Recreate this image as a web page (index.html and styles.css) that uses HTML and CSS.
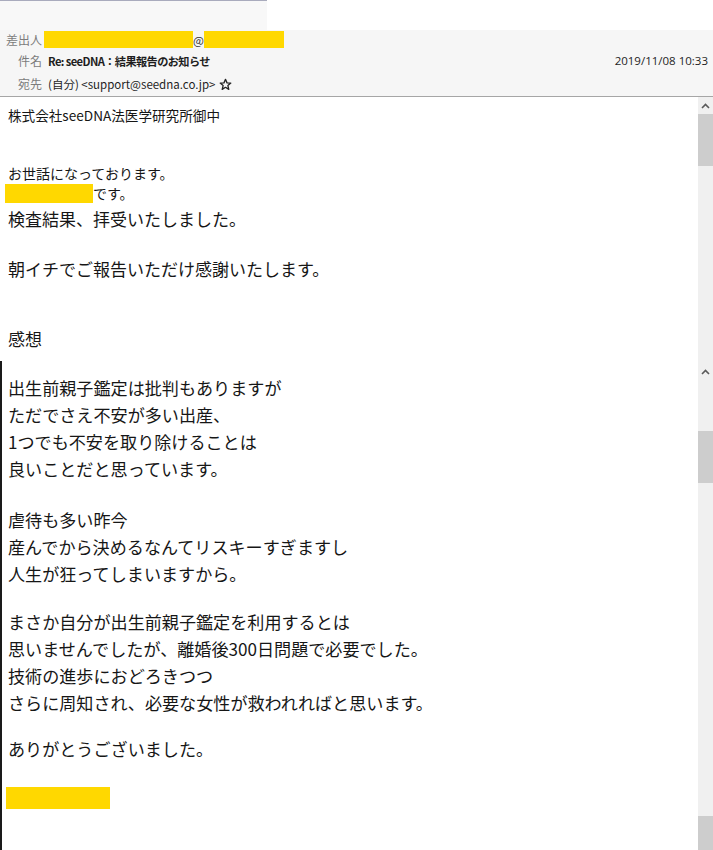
FILE: index.html
```html
<!DOCTYPE html>
<html lang="ja">
<head>
<meta charset="utf-8">
<title>Re: seeDNA：結果報告のお知らせ</title>
<link rel="stylesheet" href="styles.css">
</head>
<body>
<div class="topstrip"><div class="tab"></div></div>
<header class="hdr">
  <div class="row row-from">
    <span class="lbl">差出人</span>
    <span class="mask mask-name"></span><span class="at">@</span><span class="mask mask-domain"></span>
  </div>
  <div class="row row-subj">
    <span class="lbl">件名</span>
    <span class="subject">Re: seeDNA：結果報告のお知らせ</span>
    <span class="date">2019/11/08 10:33</span>
  </div>
  <div class="row row-to">
    <span class="lbl">宛先</span>
    <span class="val">(自分) &lt;support@seedna.co.jp&gt;</span>
    <svg class="star" width="13" height="13" viewBox="0 0 24 24"><polygon points="12,2.5 14.8,9 21.8,9.4 16.4,14 18.1,20.9 12,17.2 5.9,20.9 7.6,14 2.2,9.4 9.2,9" fill="none" stroke="#222" stroke-width="2.4" stroke-linejoin="round"/></svg>
  </div>
</header>

<section class="pane pane-1">
  <div class="content c1">
    <p class="addr">株式会社seeDNA法医学研究所御中</p>
    <p class="greet">お世話になっております。</p>
    <p class="name"><span class="mask mask-sender"></span>です。</p>
    <p class="big l-recv">検査結果、拝受いたしました。</p>
    <p class="big l-thanks">朝イチでご報告いただけ感謝いたします。</p>
    <p class="big l-kanso">感想</p>
  </div>
  <div class="sbar sbar-1">
    <div class="arrow"><svg width="9" height="6" viewBox="0 0 9 6"><polyline points="1,5 4.5,1.5 8,5" fill="none" stroke="#5a5a5a" stroke-width="1.6"/></svg></div>
    <div class="thumb t1"></div>
    <div class="track"></div>
  </div>
</section>

<section class="pane pane-2">
  <div class="content c2">
    <p class="para">出生前親子鑑定は批判もありますが<br>ただでさえ不安が多い出産、<br>1つでも不安を取り除けることは<br>良いことだと思っています。</p>
    <p class="para p2">虐待も多い昨今<br>産んでから決めるなんてリスキーすぎますし<br>人生が狂ってしまいますから。</p>
    <p class="para p3">まさか自分が出生前親子鑑定を利用するとは<br>思いませんでしたが、離婚後300日問題で必要でした。<br>技術の進歩におどろきつつ<br>さらに周知され、必要な女性が救われればと思います。</p>
    <p class="para p4">ありがとうございました。</p>
    <div class="mask mask-sign"></div>
  </div>
  <div class="sbar sbar-2">
    <div class="arrow"><svg width="9" height="6" viewBox="0 0 9 6"><polyline points="1,5 4.5,1.5 8,5" fill="none" stroke="#5a5a5a" stroke-width="1.6"/></svg></div>
    <div class="track gap-a"></div>
    <div class="thumb t2"></div>
    <div class="track gap-b"></div>
    <div class="thumb t3"></div>
  </div>
</section>
</body>
</html>
```

FILE: styles.css
```css
html, body {
  margin: 0;
  padding: 0;
  background: #ffffff;
}
body {
  width: 713px;
  height: 850px;
  overflow: hidden;
  font-family: "Noto Sans CJK JP", "Noto Sans", sans-serif;
  color: #161616;
}
p { margin: 0; }

/* top strip */
.topstrip {
  height: 30px;
  background: #ffffff;
}
.tab {
  width: 267px;
  height: 29px;
  border-top: 1px solid #a9abbd;
  background: #f8f8f8;
}

/* header */
.hdr {
  background: #f6f6f6;
  border-bottom: 1px solid #a6a6a6;
  font-size: 12px;
}
.row {
  display: flex;
  align-items: center;
}
.row-from { height: 19px; }
.row-subj { height: 23px; }
.row-to { height: 24px; }
.lbl {
  width: 42px;
  text-align: right;
  color: #7c7c7c;
  flex: none;
  line-height: 16px;
}
.mask { background: #ffd800; display: inline-block; }
.mask-name { width: 149px; height: 17px; margin-left: 2px; }
.mask-domain { width: 80px; height: 17px; }
.at {
  width: 11px;
  text-align: center;
  color: #333;
  font-size: 11.5px;
  line-height: 16px;
}
.subject {
  margin-left: 6px;
  font-weight: 700;
  color: #1e1e1e;
  font-size: 11.2px;
  letter-spacing: -0.6px;
  line-height: 16px;
}
.date {
  margin-left: auto;
  margin-right: 5px;
  color: #1e1e1e;
  font-family: "Open Sans", "Noto Sans", sans-serif;
  font-size: 11.5px;
  line-height: 16px;
}
.val {
  margin-left: 6px;
  color: #1e1e1e;
  font-size: 11.5px;
  line-height: 16px;
}
.star { margin-left: 4px; }

/* panes */
.pane {
  display: grid;
  grid-template-columns: 1fr 15px;
}
.pane-1 { height: 264px; }
.pane-2 { height: 489px; }

.content { overflow: hidden; }
.c1 { padding: 9px 0 0 8px; }
.c2 {
  border-left: 2px solid #1a1a1a;
  padding: 13px 0 0 6px;
}

.addr { font-size: 13.6px; line-height: 18px; }
.greet { font-size: 14px; line-height: 18px; margin-top: 40px; }
.name {
  font-size: 14px;
  line-height: 21px;
  margin-top: 1px;
  display: flex;
  align-items: center;
}
.mask-sender { width: 88px; height: 19px; margin-left: -3px; }
.big { font-size: 17px; line-height: 25px; }
.l-recv { margin-top: 2px; }
.l-thanks { margin-top: 25px; }
.l-kanso { margin-top: 45px; }

.para { font-size: 17.1px; line-height: 27px; }
.p2 { margin-top: 24px; }
.p3 { margin-top: 21px; }
.p4 { margin-top: 19px; }
.mask-sign { display: block; width: 104px; height: 22px; margin: 25px 0 0 -2px; }

/* scrollbars */
.sbar {
  display: flex;
  flex-direction: column;
  background: #f0f0f0;
}
.arrow {
  height: 17px;
  display: flex;
  align-items: center;
  justify-content: center;
  flex: none;
}
.thumb { background: #cdcdcd; flex: none; }
.track { background: #f0f0f0; }
.t1 { height: 52px; }
.sbar-1 .track { flex: 1; }
.sbar-2 .arrow { height: 21px; margin-top: 0; }
.gap-a { height: 49px; flex: none; }
.t2 { height: 52px; }
.gap-b { flex: 1; }
.t3 { height: 34px; }
```
